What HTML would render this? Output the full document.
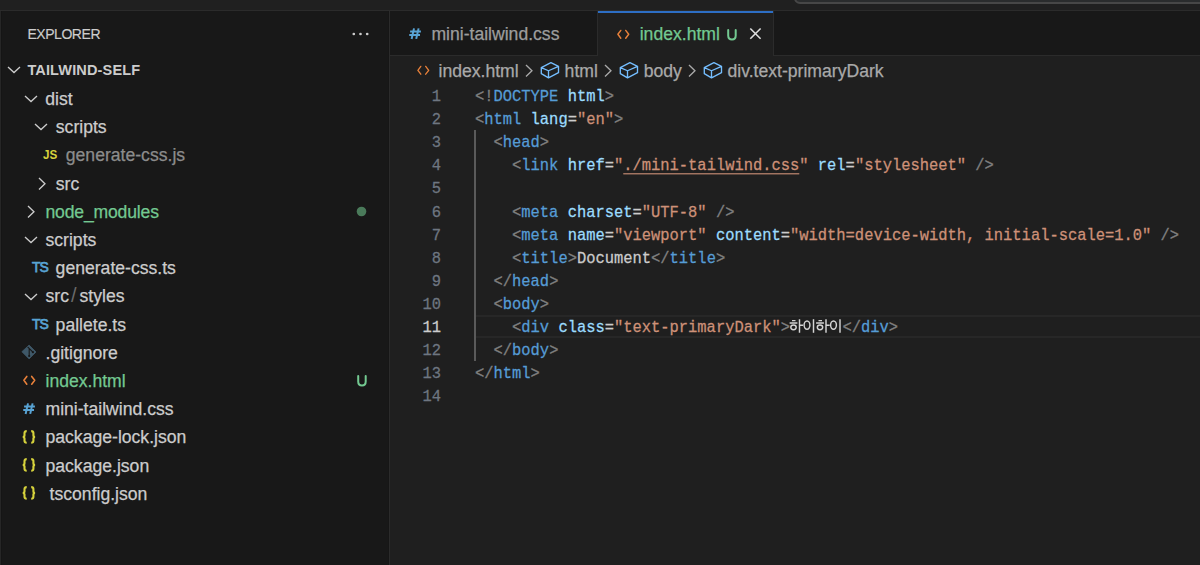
<!DOCTYPE html>
<html><head><meta charset="utf-8">
<style>
*{margin:0;padding:0;box-sizing:border-box}
html,body{width:1200px;height:565px;overflow:hidden;background:#1f1f1f;font-family:"Liberation Sans",sans-serif;position:relative}
.abs,.sr,.ic,.ict,.code,.ln,.tx{position:absolute}
#title{left:0;top:0;width:1200px;height:10px;background:#202020}
#titleline{left:0;top:10px;width:1200px;height:1px;background:#2b2b2b}
#search{left:794px;top:-10px;width:420px;height:14px;background:#2a2c2d;border:2px solid #474747;border-radius:6px}
#side{left:0;top:11px;width:389px;height:554px;background:#181818}
#sideline{left:389px;top:11px;width:1px;height:554px;background:#2b2b2b}
.sr{font-size:17.6px;line-height:20px;white-space:pre;-webkit-text-stroke:0.25px currentColor}
.ict{font-size:13px;line-height:20px;transform:scaleX(0.86);transform-origin:0 0;white-space:pre}
.tx{font-size:17.6px;line-height:20px;white-space:pre;-webkit-text-stroke:0.25px currentColor}
#tabs{left:390px;top:11px;width:810px;height:44px;background:#181818}
#tabsline{left:390px;top:55px;width:810px;height:1px;background:#2b2b2b}
#acttab{left:597px;top:11px;width:177px;height:45px;background:#1f1f1f;border-left:1px solid #2b2b2b;border-right:1px solid #2b2b2b}
#acttop{left:598px;top:11px;width:175px;height:2px;background:#2d6ec4}
.code{left:475px;font-family:"Liberation Mono",monospace;font-size:15.45px;white-space:pre;color:#cccccc;height:23.1px;line-height:23px;padding-top:1.4px;-webkit-text-stroke:0.25px currentColor;transform:translateY(0.5px) scaleY(1.1);transform-origin:0 11.5px}
.ln{left:395px;width:46px;text-align:right;font-family:"Liberation Mono",monospace;font-size:15.45px;color:#6e7681;height:23.1px;line-height:23px;padding-top:1.4px;-webkit-text-stroke:0.25px currentColor;transform:translateY(0.5px) scaleY(1.1);transform-origin:0 11.5px}
.ln.act{color:#cccccc}
.tg{color:#569cd6}.p{color:#808080}.at{color:#9cdcfe}.st{color:#ce9178}
.ul{text-decoration:underline;text-underline-offset:3px}
#curline{left:475px;top:315px;width:725px;height:23px;border-top:2px solid #272727;border-bottom:2px solid #272727}
#guide{left:474px;top:130px;width:2px;height:231px;background:#5a5a5a}
</style></head><body>
<div class="abs" id="title"></div>
<div class="abs" id="titleline"></div>
<div class="abs" id="search"></div>
<div class="abs" id="side"></div>
<div class="abs" id="sideline"></div>
<div class="abs" style="left:388px;top:11px;width:1px;height:554px;background:#161616"></div>
<div class="abs" style="left:0;top:11px;width:1px;height:554px;background:#262626"></div>
<div class="abs" style="left:1px;top:11px;width:1px;height:554px;background:#151515"></div>
<div class="abs" id="tabs"></div>
<div class="abs" id="tabsline"></div>
<div class="abs" id="acttab"></div>
<div class="abs" id="acttop"></div>

<div class="tx" style="left:27.4px;top:23.5px;font-size:14px;letter-spacing:-0.45px;color:#cccccc;-webkit-text-stroke:0.15px #cccccc">EXPLORER</div>
<svg class="ic" style="left:352px;top:32px" width="17" height="4" viewBox="0 0 17 4"><circle cx="1.8" cy="2" r="1.35" fill="#cccccc"/><circle cx="8.5" cy="2" r="1.35" fill="#cccccc"/><circle cx="15.2" cy="2" r="1.35" fill="#cccccc"/></svg>
<div class="tx" style="left:27.4px;top:60px;font-size:14.5px;letter-spacing:0.15px;font-weight:bold;color:#cccccc;-webkit-text-stroke:0">TAILWIND-SELF</div>
<svg class="ic" style="left:7.00px;top:66.30px" width="14" height="8" viewBox="0 0 14 8"><path d="M1 1 L7 6.5 L13 1" fill="none" stroke="#cccccc" stroke-width="1.35"/></svg>
<div class="sr" style="left:45.3px;top:88.9px;color:#cccccc">dist</div>
<svg class="ic" style="left:23.60px;top:95.10px" width="14" height="8" viewBox="0 0 14 8"><path d="M1 1 L7 6.5 L13 1" fill="none" stroke="#cccccc" stroke-width="1.35"/></svg>
<div class="sr" style="left:55.8px;top:117.1px;color:#cccccc">scripts</div>
<svg class="ic" style="left:33.80px;top:123.30px" width="14" height="8" viewBox="0 0 14 8"><path d="M1 1 L7 6.5 L13 1" fill="none" stroke="#cccccc" stroke-width="1.35"/></svg>
<div class="sr" style="left:65.8px;top:145.3px;color:#8c8c8c">generate-css.js</div>
<div class="ict" style="left:43px;top:145.0px;color:#d6d23c;font-weight:bold;font-size:13.6px">JS</div>
<div class="sr" style="left:55.8px;top:173.5px;color:#cccccc">src</div>
<svg class="ic" style="left:37.70px;top:176.50px" width="8" height="14" viewBox="0 0 8 14"><path d="M1 1 L6.95 6.8 L1 12.5" fill="none" stroke="#cccccc" stroke-width="1.35"/></svg>
<div class="sr" style="left:45.5px;top:201.7px;color:#73c991;letter-spacing:-0.18px">node_modules</div>
<svg class="ic" style="left:27.40px;top:204.70px" width="8" height="14" viewBox="0 0 8 14"><path d="M1 1 L6.95 6.8 L1 12.5" fill="none" stroke="#cccccc" stroke-width="1.35"/></svg>
<div class="sr" style="left:45.5px;top:229.9px;color:#cccccc">scripts</div>
<svg class="ic" style="left:23.60px;top:236.10px" width="14" height="8" viewBox="0 0 14 8"><path d="M1 1 L7 6.5 L13 1" fill="none" stroke="#cccccc" stroke-width="1.35"/></svg>
<div class="sr" style="left:55.6px;top:258.1px;color:#cccccc">generate-css.ts</div>
<div class="ict" style="left:31.7px;top:257.4px;color:#58a3d4;font-size:15px;letter-spacing:-1.2px;transform:scaleX(0.93);-webkit-text-stroke:0.75px #58a3d4">TS</div>
<div class="sr" style="left:45.5px;top:286.3px;color:#cccccc">src<span style="color:#6a6a6a;padding:0 3px 0 2px;font-size:20px;line-height:10px;-webkit-text-stroke:0">/</span>styles</div>
<svg class="ic" style="left:23.60px;top:292.50px" width="14" height="8" viewBox="0 0 14 8"><path d="M1 1 L7 6.5 L13 1" fill="none" stroke="#cccccc" stroke-width="1.35"/></svg>
<div class="sr" style="left:55.6px;top:314.5px;color:#cccccc">pallete.ts</div>
<div class="ict" style="left:31.7px;top:313.8px;color:#58a3d4;font-size:15px;letter-spacing:-1.2px;transform:scaleX(0.93);-webkit-text-stroke:0.75px #58a3d4">TS</div>
<div class="sr" style="left:45.5px;top:342.7px;color:#cccccc">.gitignore</div>
<svg class="ic" style="left:20px;top:344.0px" width="18" height="16" viewBox="0 0 18 16"><path d="M1.9 7.7 L9.1 1.1 L16 8 L9.1 14.9 Z" fill="#3f5868" stroke="#3f5868" stroke-width="0.8" stroke-linejoin="round"/><path d="M7.6 2.9 L12.9 8.2 M9.2 4.6 V12.2" stroke="#181818" stroke-width="1.1" fill="none"/><circle cx="12.9" cy="8.2" r="1.1" fill="#181818"/><circle cx="9.2" cy="12" r="1.1" fill="#181818"/></svg>
<div class="sr" style="left:45.5px;top:370.9px;color:#73c991">index.html</div>
<svg class="ic" style="left:21.00px;top:374.00px" width="16" height="13" viewBox="0 0 16 13"><path d="M5.8 2.4 L2.9 6.3 L5.8 10.2 M10.7 2.4 L13.7 6.3 L10.7 10.2" fill="none" stroke="#e8803a" stroke-width="1.6" stroke-linecap="round" stroke-linejoin="round"/></svg>
<div class="sr" style="left:45.5px;top:399.1px;color:#cccccc">mini-tailwind.css</div>
<svg class="ic" style="left:22.00px;top:402.00px" width="15" height="14" viewBox="0 0 15 14"><path d="M6 1.4 L3.6 12 M10.6 1.4 L8.2 11.9 M2.1 4.6 H12.9 M1.25 8 H12" fill="none" stroke="#58a3d4" stroke-width="2"/></svg>
<div class="sr" style="left:45.5px;top:427.3px;color:#cccccc">package-lock.json</div>
<svg class="ic" style="left:21.40px;top:428.90px" width="16" height="16" viewBox="0 0 16 16"><path d="M5.7 2.1 Q3.5 2.1 3.5 4.1 V6.3 Q3.5 7.95 1.7 7.95 Q3.5 7.95 3.5 9.6 V11.8 Q3.5 13.8 5.7 13.8 M10.2 2.1 Q12.4 2.1 12.4 4.1 V6.3 Q12.4 7.95 14.1 7.95 Q12.4 7.95 12.4 9.6 V11.8 Q12.4 13.8 10.2 13.8" fill="none" stroke="#d6d23c" stroke-width="2.1"/></svg>
<div class="sr" style="left:45.5px;top:455.5px;color:#cccccc">package.json</div>
<svg class="ic" style="left:21.40px;top:457.10px" width="16" height="16" viewBox="0 0 16 16"><path d="M5.7 2.1 Q3.5 2.1 3.5 4.1 V6.3 Q3.5 7.95 1.7 7.95 Q3.5 7.95 3.5 9.6 V11.8 Q3.5 13.8 5.7 13.8 M10.2 2.1 Q12.4 2.1 12.4 4.1 V6.3 Q12.4 7.95 14.1 7.95 Q12.4 7.95 12.4 9.6 V11.8 Q12.4 13.8 10.2 13.8" fill="none" stroke="#d6d23c" stroke-width="2.1"/></svg>
<div class="sr" style="left:49.6px;top:483.7px;color:#cccccc">tsconfig.json</div>
<svg class="ic" style="left:21.40px;top:485.30px" width="16" height="16" viewBox="0 0 16 16"><path d="M5.7 2.1 Q3.5 2.1 3.5 4.1 V6.3 Q3.5 7.95 1.7 7.95 Q3.5 7.95 3.5 9.6 V11.8 Q3.5 13.8 5.7 13.8 M10.2 2.1 Q12.4 2.1 12.4 4.1 V6.3 Q12.4 7.95 14.1 7.95 Q12.4 7.95 12.4 9.6 V11.8 Q12.4 13.8 10.2 13.8" fill="none" stroke="#d6d23c" stroke-width="2.1"/></svg>
<svg class="ic" style="left:356px;top:206px" width="11" height="11" viewBox="0 0 11 11"><circle cx="5.5" cy="5.5" r="4.8" fill="#4a7a5a"/></svg>
<svg class="ic" style="left:357.40px;top:374.00px" width="11" height="14" viewBox="0 0 11 14"><path d="M1.2 1.9 V7.4 Q1.2 11.4 5 11.4 Q8.7 11.4 8.7 7.4 V1.9" fill="none" stroke="#73c991" stroke-width="2" stroke-linecap="round"/></svg>

<svg class="ic" style="left:407.75px;top:26.80px" width="15" height="14" viewBox="0 0 15 14"><path d="M6 1.4 L3.6 12 M10.6 1.4 L8.2 11.9 M2.1 4.6 H12.9 M1.25 8 H12" fill="none" stroke="#58a3d4" stroke-width="2"/></svg>
<div class="tx" style="left:431.4px;top:24.4px;color:#9d9d9d">mini-tailwind.css</div>
<svg class="ic" style="left:614.93px;top:27.50px" width="16" height="13" viewBox="0 0 16 13"><path d="M5.8 2.4 L2.9 6.3 L5.8 10.2 M10.7 2.4 L13.7 6.3 L10.7 10.2" fill="none" stroke="#e8803a" stroke-width="1.45" stroke-linecap="round" stroke-linejoin="round"/></svg>
<div class="tx" style="left:639.7px;top:24.1px;color:#73c991">index.html</div>
<svg class="ic" style="left:726.90px;top:27.80px" width="11" height="14" viewBox="0 0 11 14"><path d="M1.2 1.9 V7.4 Q1.2 11.4 5 11.4 Q8.7 11.4 8.7 7.4 V1.9" fill="none" stroke="#73c991" stroke-width="2" stroke-linecap="round"/></svg>
<svg class="ic" style="left:749px;top:27px" width="13" height="13" viewBox="0 0 13 13"><path d="M1.3 1.5 L11.6 11.7 M11.6 1.5 L1.3 11.7" fill="none" stroke="#dedede" stroke-width="1.6"/></svg>

<svg class="ic" style="left:414.53px;top:64.20px" width="16" height="13" viewBox="0 0 16 13"><path d="M5.8 2.4 L2.9 6.3 L5.8 10.2 M10.7 2.4 L13.7 6.3 L10.7 10.2" fill="none" stroke="#e8803a" stroke-width="1.35" stroke-linecap="round" stroke-linejoin="round"/></svg>
<div class="tx" style="left:438.5px;top:61px;color:#a9a9a9">index.html</div>
<svg class="ic" style="left:525.00px;top:64.10px" width="8" height="14" viewBox="0 0 8 14"><path d="M1 1 L6.95 6.8 L1 12.5" fill="none" stroke="#a9a9a9" stroke-width="1.35"/></svg>
<svg class="ic" style="left:540.00px;top:62.40px" width="20" height="17" viewBox="0 0 20 17"><path d="M10.9 0.7 L18.5 4.3 L18.5 10.7 L8.5 15.8 L1.3 11.7 L1.3 5.6 Z M1.3 5.6 L8.5 8.75 L18.5 4.3 M8.5 8.75 L8.5 15.8" fill="none" stroke="#75beff" stroke-width="1.35" stroke-linejoin="round"/></svg>
<div class="tx" style="left:564.6px;top:61px;color:#a9a9a9">html</div>
<svg class="ic" style="left:604.20px;top:64.10px" width="8" height="14" viewBox="0 0 8 14"><path d="M1 1 L6.95 6.8 L1 12.5" fill="none" stroke="#a9a9a9" stroke-width="1.35"/></svg>
<svg class="ic" style="left:619.30px;top:62.40px" width="20" height="17" viewBox="0 0 20 17"><path d="M10.9 0.7 L18.5 4.3 L18.5 10.7 L8.5 15.8 L1.3 11.7 L1.3 5.6 Z M1.3 5.6 L8.5 8.75 L18.5 4.3 M8.5 8.75 L8.5 15.8" fill="none" stroke="#75beff" stroke-width="1.35" stroke-linejoin="round"/></svg>
<div class="tx" style="left:643.7px;top:61px;color:#a9a9a9">body</div>
<svg class="ic" style="left:688.00px;top:64.10px" width="8" height="14" viewBox="0 0 8 14"><path d="M1 1 L6.95 6.8 L1 12.5" fill="none" stroke="#a9a9a9" stroke-width="1.35"/></svg>
<svg class="ic" style="left:703.20px;top:62.40px" width="20" height="17" viewBox="0 0 20 17"><path d="M10.9 0.7 L18.5 4.3 L18.5 10.7 L8.5 15.8 L1.3 11.7 L1.3 5.6 Z M1.3 5.6 L8.5 8.75 L18.5 4.3 M8.5 8.75 L8.5 15.8" fill="none" stroke="#75beff" stroke-width="1.35" stroke-linejoin="round"/></svg>
<div class="tx" style="left:727.5px;top:61px;color:#a9a9a9">div.text-primaryDark</div>

<div class="abs" id="curline"></div>
<div class="abs" id="guide"></div>
<div class="ln" style="top:84.0px">1</div>
<div class="code" style="top:84.0px"><span class="p">&lt;!</span><span class="tg">DOCTYPE</span> <span class="at">html</span><span class="p">&gt;</span></div>
<div class="ln" style="top:107.1px">2</div>
<div class="code" style="top:107.1px"><span class="p">&lt;</span><span class="tg">html</span> <span class="at">lang</span>=<span class="st">"en"</span><span class="p">&gt;</span></div>
<div class="ln" style="top:130.2px">3</div>
<div class="code" style="top:130.2px">  <span class="p">&lt;</span><span class="tg">head</span><span class="p">&gt;</span></div>
<div class="ln" style="top:153.3px">4</div>
<div class="code" style="top:153.3px">    <span class="p">&lt;</span><span class="tg">link</span> <span class="at">href</span>=<span class="st">"</span><span class="st ul">./mini-tailwind.css</span><span class="st">"</span> <span class="at">rel</span>=<span class="st">"stylesheet"</span> <span class="p">/&gt;</span></div>
<div class="ln" style="top:176.4px">5</div>
<div class="code" style="top:176.4px"></div>
<div class="ln" style="top:199.5px">6</div>
<div class="code" style="top:199.5px">    <span class="p">&lt;</span><span class="tg">meta</span> <span class="at">charset</span>=<span class="st">"UTF-8"</span> <span class="p">/&gt;</span></div>
<div class="ln" style="top:222.6px">7</div>
<div class="code" style="top:222.6px">    <span class="p">&lt;</span><span class="tg">meta</span> <span class="at">name</span>=<span class="st">"viewport"</span> <span class="at">content</span>=<span class="st">"width=device-width, initial-scale=1.0"</span> <span class="p">/&gt;</span></div>
<div class="ln" style="top:245.7px">8</div>
<div class="code" style="top:245.7px">    <span class="p">&lt;</span><span class="tg">title</span><span class="p">&gt;</span>Document<span class="p">&lt;/</span><span class="tg">title</span><span class="p">&gt;</span></div>
<div class="ln" style="top:268.8px">9</div>
<div class="code" style="top:268.8px">  <span class="p">&lt;/</span><span class="tg">head</span><span class="p">&gt;</span></div>
<div class="ln" style="top:291.9px">10</div>
<div class="code" style="top:291.9px">  <span class="p">&lt;</span><span class="tg">body</span><span class="p">&gt;</span></div>
<div class="ln act" style="top:315.0px">11</div>
<div class="code" style="top:315.0px">    <span class="p">&lt;</span><span class="tg">div</span> <span class="at">class</span>=<span class="st">"text-primaryDark"</span><span class="p">&gt;</span></div>
<svg class="ic" style="left:786px;top:315.7px" width="60" height="22" viewBox="0 0 60 22"><g fill="none" stroke="#d4d4d4" stroke-width="1.45" id="hi"><path d="M6 4.6 H9.5 M3.6 6.9 H11.4"/><ellipse cx="7.5" cy="11.3" rx="2.7" ry="2.4"/><path d="M13.5 3.2 V16.8 M13.5 9.3 H17.2"/><ellipse cx="21" cy="9.1" rx="2.9" ry="4.2"/><path d="M27.5 3.2 V16.8"/></g><use href="#hi" x="26.5"/></svg>
<div class="code" style="top:315.0px;left:842.5px"><span class="p">&lt;/</span><span class="tg">div</span><span class="p">&gt;</span></div>
<div class="ln" style="top:338.1px">12</div>
<div class="code" style="top:338.1px">  <span class="p">&lt;/</span><span class="tg">body</span><span class="p">&gt;</span></div>
<div class="ln" style="top:361.2px">13</div>
<div class="code" style="top:361.2px"><span class="p">&lt;/</span><span class="tg">html</span><span class="p">&gt;</span></div>
<div class="ln" style="top:384.3px">14</div>
<div class="code" style="top:384.3px"></div>
</body></html>
